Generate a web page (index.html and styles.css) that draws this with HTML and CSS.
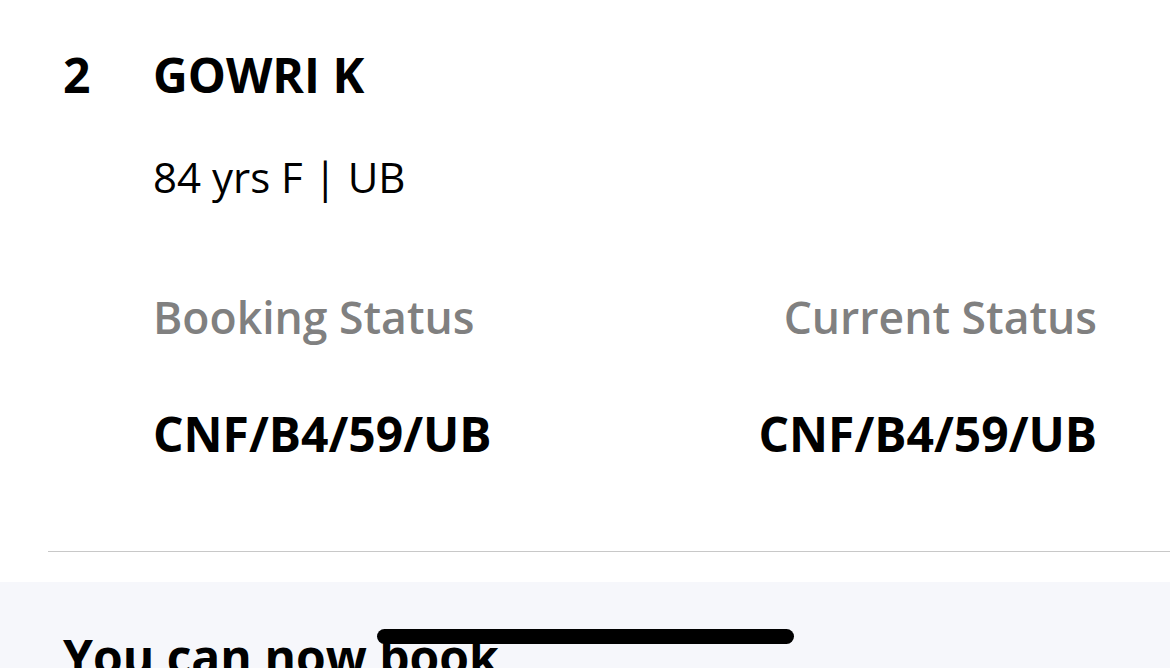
FILE: index.html
```html
<!DOCTYPE html>
<html lang="en">
<head>
<meta charset="utf-8">
<title>Passenger Status</title>
<link rel="stylesheet" href="styles.css">
</head>
<body>
<div class="screen">
  <section class="passenger">
    <div class="head">
      <span class="num">2</span>
      <span class="name">GOWRI K</span>
    </div>
    <div class="meta">84 yrs F | UB</div>
    <div class="status">
      <div class="col">
        <div class="label">Booking Status</div>
        <div class="value">CNF/B4/59/UB</div>
      </div>
      <div class="col right">
        <div class="label">Current Status</div>
        <div class="value">CNF/B4/59/UB</div>
      </div>
    </div>
  </section>
  <div class="divider"></div>
  <section class="promo">
    <h2 class="promo-title">You can now book</h2>
  </section>
  <div class="home-indicator"></div>
</div>
</body>
</html>
```
FILE: styles.css
```css
html, body {
  margin: 0;
  padding: 0;
  background: #ffffff;
}
body {
  font-family: "Open Sans", "Noto Sans", sans-serif;
  color: #000000;
}
.screen {
  position: relative;
  width: 1170px;
  height: 668px;
  overflow: hidden;
}
.passenger {
  padding: 42px 73px 0 63px;
}
.head {
  display: flex;
  font-size: 48px;
  font-weight: 700;
  line-height: 66px;
}
.num {
  width: 90px;
}
.meta {
  margin-top: 40px;
  padding-left: 90px;
  font-size: 42px;
  line-height: 57px;
}
.status {
  display: flex;
  justify-content: space-between;
  padding-left: 90px;
  margin-top: 82px;
}
.col.right {
  text-align: right;
}
.label {
  font-size: 44.5px;
  font-weight: 600;
  line-height: 60px;
  color: #808080;
}
.value {
  margin-top: 54px;
  font-size: 48px;
  font-weight: 700;
  line-height: 66px;
}
.divider {
  margin: 84px 0 0 48px;
  border-top: 1px solid #c8c8c8;
}
.promo {
  margin-top: 30px;
  background: #f6f7fb;
  padding: 42px 63px 0;
  height: 200px;
}
.promo-title {
  margin: 0;
  font-size: 48px;
  font-weight: 700;
  line-height: 66px;
}
.home-indicator {
  position: absolute;
  left: 377px;
  top: 629px;
  width: 417px;
  height: 15px;
  border-radius: 8px;
  background: #000000;
}
```
